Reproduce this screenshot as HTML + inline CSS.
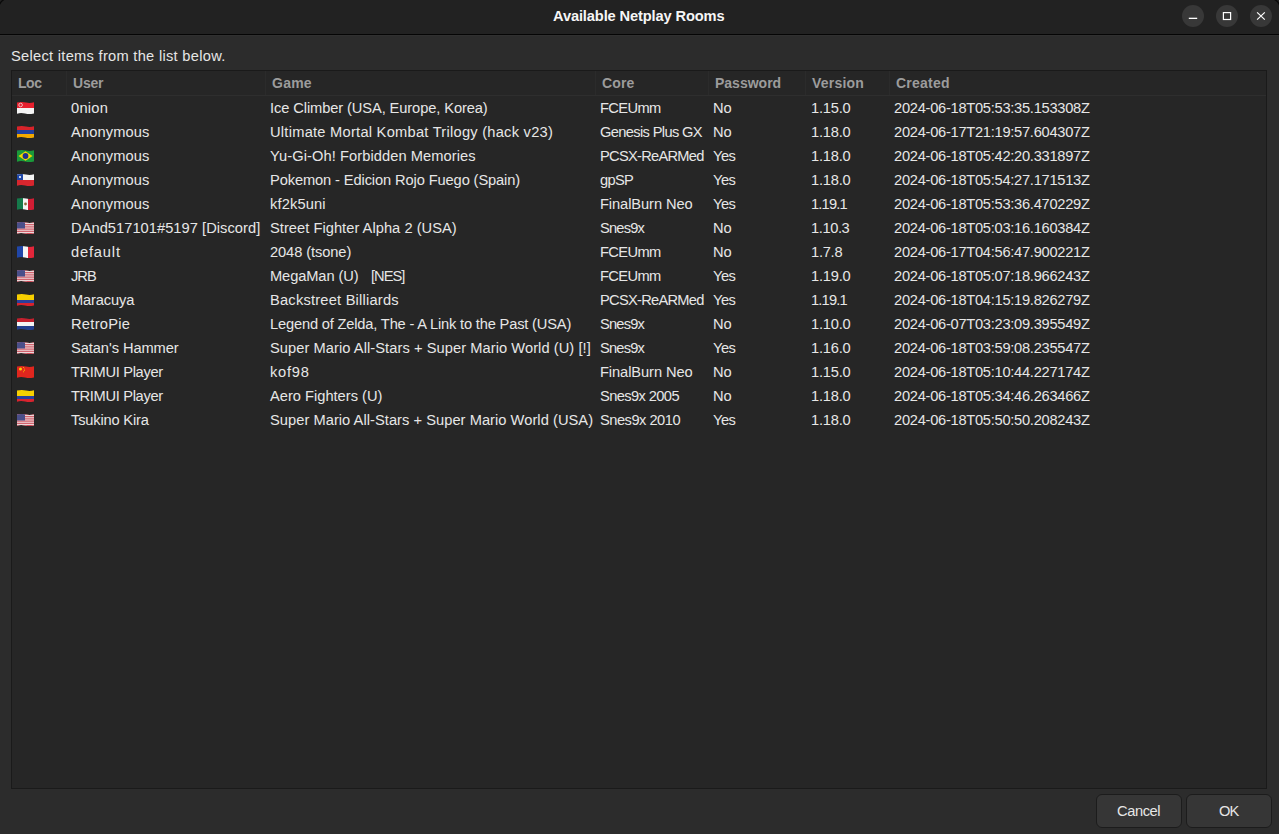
<!DOCTYPE html>
<html><head><meta charset="utf-8"><style>
html,body{margin:0;padding:0}
body{width:1279px;height:834px;overflow:hidden;position:relative;background:#2c2c2c;font-family:"Liberation Sans",sans-serif;font-size:14.6667px;color:#e6e6e6}
.t{position:absolute;white-space:pre}
.abs{position:absolute}
</style></head><body>
<div class="abs" style="left:0;top:0;width:1279px;height:34px;background:#222222"></div>
<div class="abs" style="left:0;top:34px;width:1279px;height:1px;background:#050505"></div>
<div class="abs" style="left:0;top:35px;width:1279px;height:1px;background:#303030"></div>
<div class="t" style="left:553px;top:4px;line-height:24px;letter-spacing:-0.136px;font-weight:700;color:#f6f6f6">Available Netplay Rooms</div>
<svg class="abs" style="left:0;top:0" width="1279" height="10" viewBox="0 0 1279 10"><path d="M-0.5 4.5 Q1 1 4 -0.5" stroke="#0a0a0a" stroke-width="1.2" fill="none"/><path d="M1274.5 -0.5 Q1278 1 1279.5 5" stroke="#0a0a0a" stroke-width="1.2" fill="none"/></svg>
<div class="abs" style="left:1182px;top:5px;width:22px;height:22px;border-radius:50%;background:#383838"></div>
<div class="abs" style="left:1216px;top:5px;width:22px;height:22px;border-radius:50%;background:#383838"></div>
<div class="abs" style="left:1250px;top:5px;width:22px;height:22px;border-radius:50%;background:#383838"></div>
<svg class="abs" style="left:1175px;top:0" width="104" height="34" viewBox="0 0 104 34"><rect x="13.8" y="17.7" width="8.4" height="1.3" fill="#fff"/><rect x="48.4" y="12.6" width="7.2" height="6.9" fill="none" stroke="#fff" stroke-width="1.2"/><path d="M82.1 12.4 L89.8 19.6 M89.8 12.4 L82.1 19.6" stroke="#fff" stroke-width="1.2"/></svg>
<div class="t" style="left:11px;top:44px;line-height:24px;letter-spacing:0.281px">Select items from the list below.</div>
<div class="abs" style="left:11px;top:70px;width:1254px;height:717px;border:1px solid #1a1a1a;background:#262626"></div>
<div class="abs" style="left:12px;top:95px;width:1254px;height:1px;background:#2e2e2e"></div>
<div class="abs" style="left:66px;top:71px;width:1px;height:24px;background:#2b2b2b"></div>
<div class="abs" style="left:265px;top:71px;width:1px;height:24px;background:#2b2b2b"></div>
<div class="abs" style="left:595px;top:71px;width:1px;height:24px;background:#2b2b2b"></div>
<div class="abs" style="left:708px;top:71px;width:1px;height:24px;background:#2b2b2b"></div>
<div class="abs" style="left:805px;top:71px;width:1px;height:24px;background:#2b2b2b"></div>
<div class="abs" style="left:889px;top:71px;width:1px;height:24px;background:#2b2b2b"></div>
<div class="t" style="left:18px;top:71px;line-height:24px;letter-spacing:-0.455px;font-size:14px;font-weight:700;color:#9c9c9c">Loc</div>
<div class="t" style="left:73px;top:71px;line-height:24px;letter-spacing:-0.197px;font-size:14px;font-weight:700;color:#9c9c9c">User</div>
<div class="t" style="left:272px;top:71px;line-height:24px;letter-spacing:0.242px;font-size:14px;font-weight:700;color:#9c9c9c">Game</div>
<div class="t" style="left:602px;top:71px;line-height:24px;letter-spacing:0.136px;font-size:14px;font-weight:700;color:#9c9c9c">Core</div>
<div class="t" style="left:715px;top:71px;line-height:24px;letter-spacing:0.000px;font-size:14px;font-weight:700;color:#9c9c9c">Password</div>
<div class="t" style="left:812px;top:71px;line-height:24px;letter-spacing:0.220px;font-size:14px;font-weight:700;color:#9c9c9c">Version</div>
<div class="t" style="left:896px;top:71px;line-height:24px;letter-spacing:0.227px;font-size:14px;font-weight:700;color:#9c9c9c">Created</div>
<svg class="abs" style="left:17px;top:102px" width="17" height="12" viewBox="0 0 17 12"><clipPath id="c0"><path d="M0 0.6 Q5 -0.4 9 0.6 T17 0.3 L17 11.6 Q12 12.6 8 11.6 T0 11.7 Z"/></clipPath><g clip-path="url(#c0)"><rect x="0" y="0" width="17" height="6" fill="#e8202e"/><rect x="0" y="6" width="17" height="6" fill="#f4f4f4"/><circle cx="3.6" cy="3" r="1.8" fill="none" stroke="#f4f4f4" stroke-width="0.7"/></g></svg>
<div class="t" style="left:71px;top:96px;line-height:24px;letter-spacing:0.250px">0nion</div>
<div class="t" style="left:270px;top:96px;line-height:24px;letter-spacing:-0.097px">Ice Climber (USA, Europe, Korea)</div>
<div class="t" style="left:600px;top:96px;line-height:24px;letter-spacing:-0.600px">FCEUmm</div>
<div class="t" style="left:713px;top:96px;line-height:24px;letter-spacing:0.000px">No</div>
<div class="t" style="left:811px;top:96px;line-height:24px;letter-spacing:-0.200px">1.15.0</div>
<div class="t" style="left:894px;top:96px;line-height:24px;letter-spacing:-0.269px">2024-06-18T05:53:35.153308Z</div>
<svg class="abs" style="left:17px;top:126px" width="17" height="12" viewBox="0 0 17 12"><clipPath id="c1"><path d="M0 0.6 Q5 -0.4 9 0.6 T17 0.3 L17 11.6 Q12 12.6 8 11.6 T0 11.7 Z"/></clipPath><g clip-path="url(#c1)"><rect x="0" y="0" width="17" height="4" fill="#d8232a"/><rect x="0" y="4" width="17" height="4" fill="#1f3fa0"/><rect x="0" y="8" width="17" height="4" fill="#f2a800"/></g></svg>
<div class="t" style="left:71px;top:120px;line-height:24px;letter-spacing:0.125px">Anonymous</div>
<div class="t" style="left:270px;top:120px;line-height:24px;letter-spacing:0.250px">Ultimate Mortal Kombat Trilogy (hack v23)</div>
<div class="t" style="left:600px;top:120px;line-height:24px;letter-spacing:-0.643px">Genesis Plus GX</div>
<div class="t" style="left:713px;top:120px;line-height:24px;letter-spacing:0.000px">No</div>
<div class="t" style="left:811px;top:120px;line-height:24px;letter-spacing:-0.200px">1.18.0</div>
<div class="t" style="left:894px;top:120px;line-height:24px;letter-spacing:-0.269px">2024-06-17T21:19:57.604307Z</div>
<svg class="abs" style="left:17px;top:150px" width="17" height="12" viewBox="0 0 17 12"><clipPath id="c2"><path d="M0 0.6 Q5 -0.4 9 0.6 T17 0.3 L17 11.6 Q12 12.6 8 11.6 T0 11.7 Z"/></clipPath><g clip-path="url(#c2)"><rect x="0" y="0" width="17" height="12" fill="#1a9a3a"/><polygon points="8.5,1.3 15.5,6 8.5,10.7 1.5,6" fill="#f5d800"/><circle cx="8.5" cy="6" r="2.9" fill="#20308c"/></g></svg>
<div class="t" style="left:71px;top:144px;line-height:24px;letter-spacing:0.125px">Anonymous</div>
<div class="t" style="left:270px;top:144px;line-height:24px;letter-spacing:0.074px">Yu-Gi-Oh! Forbidden Memories</div>
<div class="t" style="left:600px;top:144px;line-height:24px;letter-spacing:-0.727px">PCSX-ReARMed</div>
<div class="t" style="left:713px;top:144px;line-height:24px;letter-spacing:-0.500px">Yes</div>
<div class="t" style="left:811px;top:144px;line-height:24px;letter-spacing:-0.200px">1.18.0</div>
<div class="t" style="left:894px;top:144px;line-height:24px;letter-spacing:-0.269px">2024-06-18T05:42:20.331897Z</div>
<svg class="abs" style="left:17px;top:174px" width="17" height="12" viewBox="0 0 17 12"><clipPath id="c3"><path d="M0 0.6 Q5 -0.4 9 0.6 T17 0.3 L17 11.6 Q12 12.6 8 11.6 T0 11.7 Z"/></clipPath><g clip-path="url(#c3)"><rect x="0" y="0" width="17" height="6" fill="#f4f4f4"/><rect x="0" y="6" width="17" height="6" fill="#d7262e"/><rect x="0" y="0" width="6" height="6" fill="#1f47a8"/><circle cx="3" cy="3" r="1" fill="#fff"/></g></svg>
<div class="t" style="left:71px;top:168px;line-height:24px;letter-spacing:0.125px">Anonymous</div>
<div class="t" style="left:270px;top:168px;line-height:24px;letter-spacing:-0.114px">Pokemon - Edicion Rojo Fuego (Spain)</div>
<div class="t" style="left:600px;top:168px;line-height:24px;letter-spacing:-0.667px">gpSP</div>
<div class="t" style="left:713px;top:168px;line-height:24px;letter-spacing:-0.500px">Yes</div>
<div class="t" style="left:811px;top:168px;line-height:24px;letter-spacing:-0.200px">1.18.0</div>
<div class="t" style="left:894px;top:168px;line-height:24px;letter-spacing:-0.269px">2024-06-18T05:54:27.171513Z</div>
<svg class="abs" style="left:17px;top:198px" width="17" height="12" viewBox="0 0 17 12"><clipPath id="c4"><path d="M0 0.6 Q5 -0.4 9 0.6 T17 0.3 L17 11.6 Q12 12.6 8 11.6 T0 11.7 Z"/></clipPath><g clip-path="url(#c4)"><rect x="0" y="0" width="6" height="12" fill="#157a4b"/><rect x="6" y="0" width="5" height="12" fill="#f4f4f4"/><rect x="11" y="0" width="6" height="12" fill="#d11d34"/><circle cx="8.5" cy="6" r="1.4" fill="#8a6a3a"/></g></svg>
<div class="t" style="left:71px;top:192px;line-height:24px;letter-spacing:0.125px">Anonymous</div>
<div class="t" style="left:270px;top:192px;line-height:24px;letter-spacing:0.143px">kf2k5uni</div>
<div class="t" style="left:600px;top:192px;line-height:24px;letter-spacing:-0.083px">FinalBurn Neo</div>
<div class="t" style="left:713px;top:192px;line-height:24px;letter-spacing:-0.500px">Yes</div>
<div class="t" style="left:811px;top:192px;line-height:24px;letter-spacing:-0.800px">1.19.1</div>
<div class="t" style="left:894px;top:192px;line-height:24px;letter-spacing:-0.269px">2024-06-18T05:53:36.470229Z</div>
<svg class="abs" style="left:17px;top:222px" width="17" height="12" viewBox="0 0 17 12"><clipPath id="c5"><path d="M0 0.6 Q5 -0.4 9 0.6 T17 0.3 L17 11.6 Q12 12.6 8 11.6 T0 11.7 Z"/></clipPath><g clip-path="url(#c5)"><rect x="0" y="0" width="17" height="12" fill="#f2f2f2"/><rect x="0" y="0.00" width="17" height="0.92" fill="#c83a48"/><rect x="0" y="1.85" width="17" height="0.92" fill="#c83a48"/><rect x="0" y="3.69" width="17" height="0.92" fill="#c83a48"/><rect x="0" y="5.54" width="17" height="0.92" fill="#c83a48"/><rect x="0" y="7.38" width="17" height="0.92" fill="#c83a48"/><rect x="0" y="9.23" width="17" height="0.92" fill="#c83a48"/><rect x="0" y="11.08" width="17" height="0.92" fill="#c83a48"/><rect x="0" y="0" width="8" height="6.5" fill="#4a4f8a"/></g></svg>
<div class="t" style="left:71px;top:216px;line-height:24px;letter-spacing:0.042px">DAnd517101#5197 [Discord]</div>
<div class="t" style="left:270px;top:216px;line-height:24px;letter-spacing:0.037px">Street Fighter Alpha 2 (USA)</div>
<div class="t" style="left:600px;top:216px;line-height:24px;letter-spacing:-0.800px">Snes9x</div>
<div class="t" style="left:713px;top:216px;line-height:24px;letter-spacing:0.000px">No</div>
<div class="t" style="left:811px;top:216px;line-height:24px;letter-spacing:-0.400px">1.10.3</div>
<div class="t" style="left:894px;top:216px;line-height:24px;letter-spacing:-0.269px">2024-06-18T05:03:16.160384Z</div>
<svg class="abs" style="left:17px;top:246px" width="17" height="12" viewBox="0 0 17 12"><clipPath id="c6"><path d="M0 0.6 Q5 -0.4 9 0.6 T17 0.3 L17 11.6 Q12 12.6 8 11.6 T0 11.7 Z"/></clipPath><g clip-path="url(#c6)"><rect x="0" y="0" width="6" height="12" fill="#2046a8"/><rect x="6" y="0" width="5" height="12" fill="#f4f4f4"/><rect x="11" y="0" width="6" height="12" fill="#e3263a"/></g></svg>
<div class="t" style="left:71px;top:240px;line-height:24px;letter-spacing:0.833px">default</div>
<div class="t" style="left:270px;top:240px;line-height:24px;letter-spacing:-0.091px">2048 (tsone)</div>
<div class="t" style="left:600px;top:240px;line-height:24px;letter-spacing:-0.600px">FCEUmm</div>
<div class="t" style="left:713px;top:240px;line-height:24px;letter-spacing:0.000px">No</div>
<div class="t" style="left:811px;top:240px;line-height:24px;letter-spacing:-0.250px">1.7.8</div>
<div class="t" style="left:894px;top:240px;line-height:24px;letter-spacing:-0.269px">2024-06-17T04:56:47.900221Z</div>
<svg class="abs" style="left:17px;top:270px" width="17" height="12" viewBox="0 0 17 12"><clipPath id="c7"><path d="M0 0.6 Q5 -0.4 9 0.6 T17 0.3 L17 11.6 Q12 12.6 8 11.6 T0 11.7 Z"/></clipPath><g clip-path="url(#c7)"><rect x="0" y="0" width="17" height="12" fill="#f2f2f2"/><rect x="0" y="0.00" width="17" height="0.92" fill="#c83a48"/><rect x="0" y="1.85" width="17" height="0.92" fill="#c83a48"/><rect x="0" y="3.69" width="17" height="0.92" fill="#c83a48"/><rect x="0" y="5.54" width="17" height="0.92" fill="#c83a48"/><rect x="0" y="7.38" width="17" height="0.92" fill="#c83a48"/><rect x="0" y="9.23" width="17" height="0.92" fill="#c83a48"/><rect x="0" y="11.08" width="17" height="0.92" fill="#c83a48"/><rect x="0" y="0" width="8" height="6.5" fill="#4a4f8a"/></g></svg>
<div class="t" style="left:71px;top:264px;line-height:24px;letter-spacing:-1.000px">JRB</div>
<div class="t" style="left:270px;top:264px;line-height:24px;letter-spacing:-0.100px">MegaMan (U)</div>
<div class="t" style="left:371px;top:264px;line-height:24px;letter-spacing:-1.000px">[NES]</div>
<div class="t" style="left:600px;top:264px;line-height:24px;letter-spacing:-0.600px">FCEUmm</div>
<div class="t" style="left:713px;top:264px;line-height:24px;letter-spacing:-0.500px">Yes</div>
<div class="t" style="left:811px;top:264px;line-height:24px;letter-spacing:-0.200px">1.19.0</div>
<div class="t" style="left:894px;top:264px;line-height:24px;letter-spacing:-0.269px">2024-06-18T05:07:18.966243Z</div>
<svg class="abs" style="left:17px;top:294px" width="17" height="12" viewBox="0 0 17 12"><clipPath id="c8"><path d="M0 0.6 Q5 -0.4 9 0.6 T17 0.3 L17 11.6 Q12 12.6 8 11.6 T0 11.7 Z"/></clipPath><g clip-path="url(#c8)"><rect x="0" y="0" width="17" height="6" fill="#f7cf00"/><rect x="0" y="6" width="17" height="3" fill="#2a3f9c"/><rect x="0" y="9" width="17" height="3" fill="#d8232e"/></g></svg>
<div class="t" style="left:71px;top:288px;line-height:24px;letter-spacing:-0.143px">Maracuya</div>
<div class="t" style="left:270px;top:288px;line-height:24px;letter-spacing:0.211px">Backstreet Billiards</div>
<div class="t" style="left:600px;top:288px;line-height:24px;letter-spacing:-0.727px">PCSX-ReARMed</div>
<div class="t" style="left:713px;top:288px;line-height:24px;letter-spacing:-0.500px">Yes</div>
<div class="t" style="left:811px;top:288px;line-height:24px;letter-spacing:-0.800px">1.19.1</div>
<div class="t" style="left:894px;top:288px;line-height:24px;letter-spacing:-0.269px">2024-06-18T04:15:19.826279Z</div>
<svg class="abs" style="left:17px;top:318px" width="17" height="12" viewBox="0 0 17 12"><clipPath id="c9"><path d="M0 0.6 Q5 -0.4 9 0.6 T17 0.3 L17 11.6 Q12 12.6 8 11.6 T0 11.7 Z"/></clipPath><g clip-path="url(#c9)"><rect x="0" y="0" width="17" height="4" fill="#c4202e"/><rect x="0" y="4" width="17" height="4" fill="#f4f4f4"/><rect x="0" y="8" width="17" height="4" fill="#22408e"/></g></svg>
<div class="t" style="left:71px;top:312px;line-height:24px;letter-spacing:0.286px">RetroPie</div>
<div class="t" style="left:270px;top:312px;line-height:24px;letter-spacing:-0.174px">Legend of Zelda, The - A Link to the Past (USA)</div>
<div class="t" style="left:600px;top:312px;line-height:24px;letter-spacing:-0.800px">Snes9x</div>
<div class="t" style="left:713px;top:312px;line-height:24px;letter-spacing:0.000px">No</div>
<div class="t" style="left:811px;top:312px;line-height:24px;letter-spacing:-0.200px">1.10.0</div>
<div class="t" style="left:894px;top:312px;line-height:24px;letter-spacing:-0.269px">2024-06-07T03:23:09.395549Z</div>
<svg class="abs" style="left:17px;top:342px" width="17" height="12" viewBox="0 0 17 12"><clipPath id="c10"><path d="M0 0.6 Q5 -0.4 9 0.6 T17 0.3 L17 11.6 Q12 12.6 8 11.6 T0 11.7 Z"/></clipPath><g clip-path="url(#c10)"><rect x="0" y="0" width="17" height="12" fill="#f2f2f2"/><rect x="0" y="0.00" width="17" height="0.92" fill="#c83a48"/><rect x="0" y="1.85" width="17" height="0.92" fill="#c83a48"/><rect x="0" y="3.69" width="17" height="0.92" fill="#c83a48"/><rect x="0" y="5.54" width="17" height="0.92" fill="#c83a48"/><rect x="0" y="7.38" width="17" height="0.92" fill="#c83a48"/><rect x="0" y="9.23" width="17" height="0.92" fill="#c83a48"/><rect x="0" y="11.08" width="17" height="0.92" fill="#c83a48"/><rect x="0" y="0" width="8" height="6.5" fill="#4a4f8a"/></g></svg>
<div class="t" style="left:71px;top:336px;line-height:24px;letter-spacing:-0.077px">Satan&#x27;s Hammer</div>
<div class="t" style="left:270px;top:336px;line-height:24px;letter-spacing:0.062px">Super Mario All-Stars + Super Mario World (U) [!]</div>
<div class="t" style="left:600px;top:336px;line-height:24px;letter-spacing:-0.800px">Snes9x</div>
<div class="t" style="left:713px;top:336px;line-height:24px;letter-spacing:-0.500px">Yes</div>
<div class="t" style="left:811px;top:336px;line-height:24px;letter-spacing:-0.200px">1.16.0</div>
<div class="t" style="left:894px;top:336px;line-height:24px;letter-spacing:-0.269px">2024-06-18T03:59:08.235547Z</div>
<svg class="abs" style="left:17px;top:366px" width="17" height="12" viewBox="0 0 17 12"><clipPath id="c11"><path d="M0 0.6 Q5 -0.4 9 0.6 T17 0.3 L17 11.6 Q12 12.6 8 11.6 T0 11.7 Z"/></clipPath><g clip-path="url(#c11)"><rect x="0" y="0" width="17" height="12" fill="#e0261e"/><circle cx="3.5" cy="3" r="1.5" fill="#f9d100"/><circle cx="6.5" cy="1.5" r="0.5" fill="#f9d100"/><circle cx="7.3" cy="3" r="0.5" fill="#f9d100"/><circle cx="7.3" cy="4.5" r="0.5" fill="#f9d100"/><circle cx="6.5" cy="5.8" r="0.5" fill="#f9d100"/></g></svg>
<div class="t" style="left:71px;top:360px;line-height:24px;letter-spacing:-0.333px">TRIMUI Player</div>
<div class="t" style="left:270px;top:360px;line-height:24px;letter-spacing:0.750px">kof98</div>
<div class="t" style="left:600px;top:360px;line-height:24px;letter-spacing:-0.083px">FinalBurn Neo</div>
<div class="t" style="left:713px;top:360px;line-height:24px;letter-spacing:0.000px">No</div>
<div class="t" style="left:811px;top:360px;line-height:24px;letter-spacing:-0.200px">1.15.0</div>
<div class="t" style="left:894px;top:360px;line-height:24px;letter-spacing:-0.269px">2024-06-18T05:10:44.227174Z</div>
<svg class="abs" style="left:17px;top:390px" width="17" height="12" viewBox="0 0 17 12"><clipPath id="c12"><path d="M0 0.6 Q5 -0.4 9 0.6 T17 0.3 L17 11.6 Q12 12.6 8 11.6 T0 11.7 Z"/></clipPath><g clip-path="url(#c12)"><rect x="0" y="0" width="17" height="6" fill="#f7cf00"/><rect x="0" y="6" width="17" height="3" fill="#2a3f9c"/><rect x="0" y="9" width="17" height="3" fill="#d8232e"/></g></svg>
<div class="t" style="left:71px;top:384px;line-height:24px;letter-spacing:-0.333px">TRIMUI Player</div>
<div class="t" style="left:270px;top:384px;line-height:24px;letter-spacing:0.000px">Aero Fighters (U)</div>
<div class="t" style="left:600px;top:384px;line-height:24px;letter-spacing:-0.600px">Snes9x 2005</div>
<div class="t" style="left:713px;top:384px;line-height:24px;letter-spacing:0.000px">No</div>
<div class="t" style="left:811px;top:384px;line-height:24px;letter-spacing:-0.200px">1.18.0</div>
<div class="t" style="left:894px;top:384px;line-height:24px;letter-spacing:-0.269px">2024-06-18T05:34:46.263466Z</div>
<svg class="abs" style="left:17px;top:414px" width="17" height="12" viewBox="0 0 17 12"><clipPath id="c13"><path d="M0 0.6 Q5 -0.4 9 0.6 T17 0.3 L17 11.6 Q12 12.6 8 11.6 T0 11.7 Z"/></clipPath><g clip-path="url(#c13)"><rect x="0" y="0" width="17" height="12" fill="#f2f2f2"/><rect x="0" y="0.00" width="17" height="0.92" fill="#c83a48"/><rect x="0" y="1.85" width="17" height="0.92" fill="#c83a48"/><rect x="0" y="3.69" width="17" height="0.92" fill="#c83a48"/><rect x="0" y="5.54" width="17" height="0.92" fill="#c83a48"/><rect x="0" y="7.38" width="17" height="0.92" fill="#c83a48"/><rect x="0" y="9.23" width="17" height="0.92" fill="#c83a48"/><rect x="0" y="11.08" width="17" height="0.92" fill="#c83a48"/><rect x="0" y="0" width="8" height="6.5" fill="#4a4f8a"/></g></svg>
<div class="t" style="left:71px;top:408px;line-height:24px;letter-spacing:-0.182px">Tsukino Kira</div>
<div class="t" style="left:270px;top:408px;line-height:24px;letter-spacing:0.043px">Super Mario All-Stars + Super Mario World (USA)</div>
<div class="t" style="left:600px;top:408px;line-height:24px;letter-spacing:-0.500px">Snes9x 2010</div>
<div class="t" style="left:713px;top:408px;line-height:24px;letter-spacing:-0.500px">Yes</div>
<div class="t" style="left:811px;top:408px;line-height:24px;letter-spacing:-0.200px">1.18.0</div>
<div class="t" style="left:894px;top:408px;line-height:24px;letter-spacing:-0.269px">2024-06-18T05:50:50.208243Z</div>
<div class="abs" style="left:1096px;top:794px;width:84px;height:32px;border:1px solid #1c1c1c;border-radius:6px;background:#363636"></div>
<div class="t" style="left:1117px;top:799px;line-height:24px;letter-spacing:-0.400px">Cancel</div>
<div class="abs" style="left:1186px;top:794px;width:84px;height:32px;border:1px solid #1c1c1c;border-radius:6px;background:#363636"></div>
<div class="t" style="left:1219px;top:799px;line-height:24px;letter-spacing:-1.000px">OK</div>
</body></html>
